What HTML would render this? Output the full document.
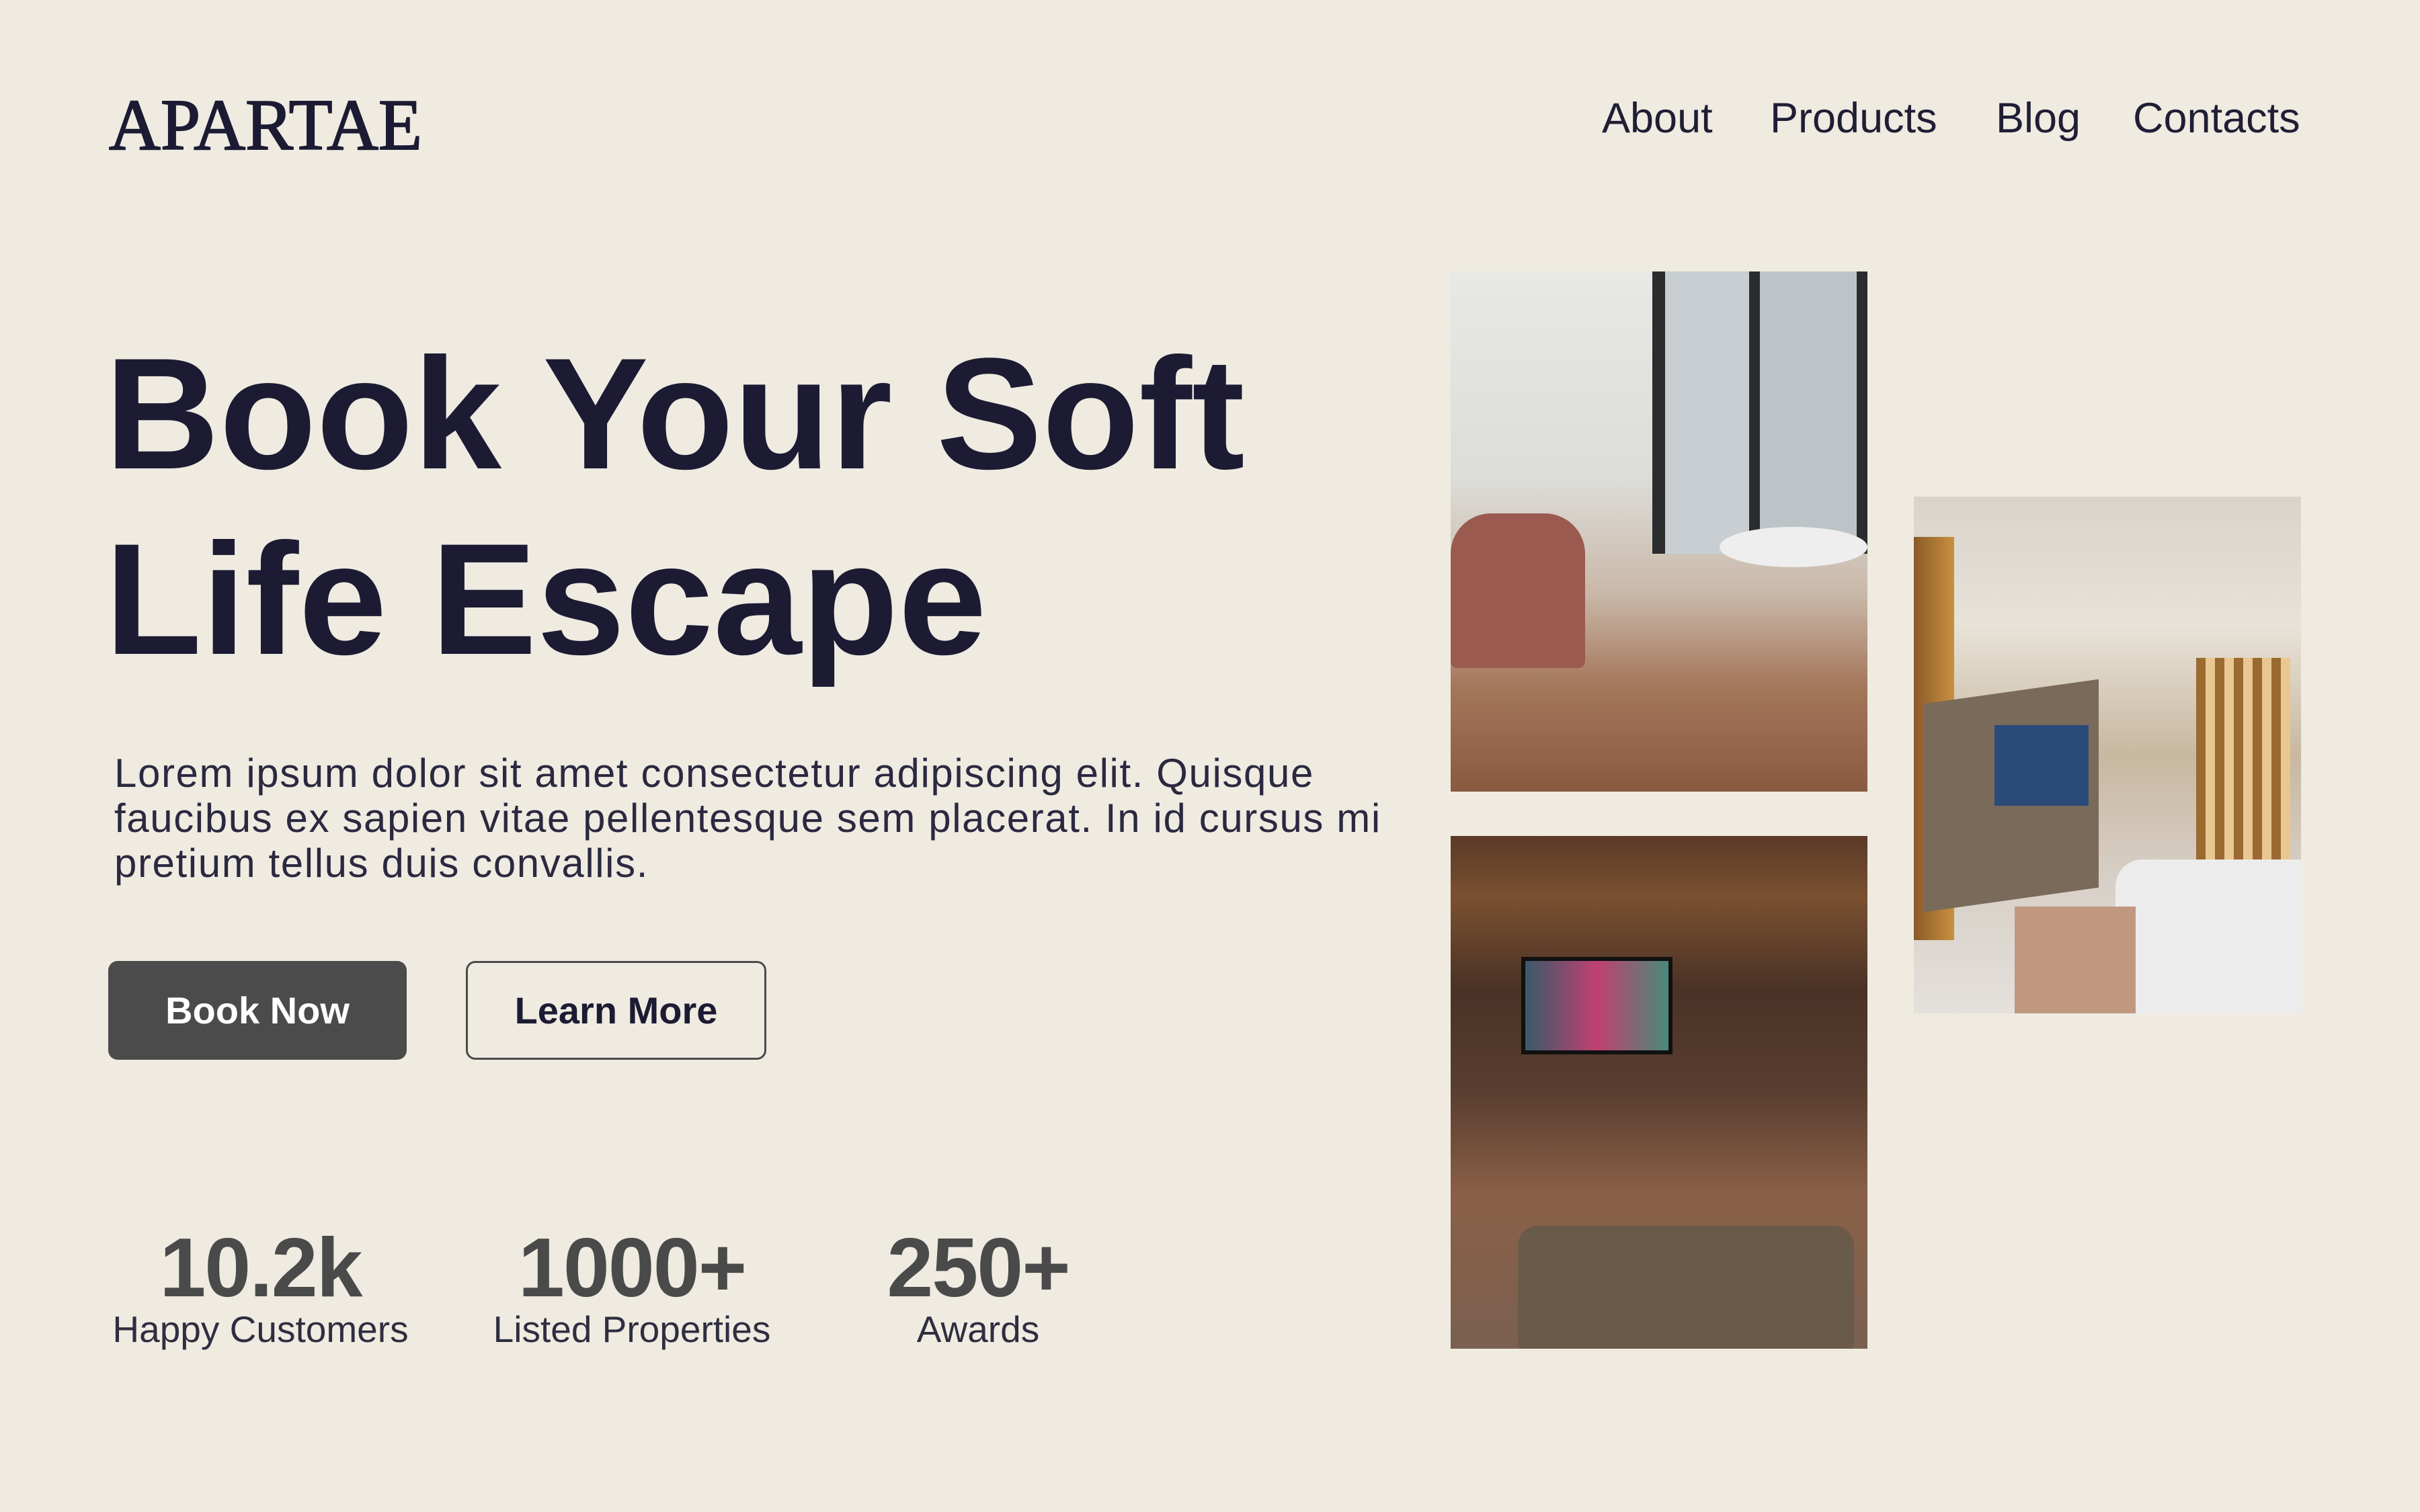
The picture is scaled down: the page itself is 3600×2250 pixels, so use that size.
<!DOCTYPE html>
<html><head><meta charset="utf-8"><style>
*{margin:0;padding:0;box-sizing:border-box}
body{width:3600px;height:2250px;background:#EFEBE1;font-family:"Liberation Sans",sans-serif;color:#1c1b33;position:relative;overflow:hidden}
.a{position:absolute;white-space:nowrap}
.nav{font-size:63px;top:140px;color:#1f1e35}
h1{position:absolute;left:156px;top:478px;font-size:236px;line-height:276px;font-weight:700;letter-spacing:0px;color:#1c1b33}
.p{left:170px;top:1117px;font-size:60px;line-height:67px;letter-spacing:1.6px;color:#2a2940}
.btn{position:absolute;top:1430px;height:147px;border-radius:14px;font-size:56px;font-weight:700;display:flex;align-items:center;justify-content:center}
.num{font-size:124px;font-weight:700;color:#4a4a4a;letter-spacing:-2px;text-align:center;top:1816px}
.lab{font-size:55px;color:#2e2e40;text-align:center;top:1946px}
.img{position:absolute;overflow:hidden}
</style></head><body>
<svg class="a" style="left:158px;top:130px" width="480" height="100"><text x="4" y="92" font-family="Liberation Serif" font-size="108" textLength="466" lengthAdjust="spacingAndGlyphs" fill="#1c1b33" stroke="#1c1b33" stroke-width="2">APARTAE</text></svg>
<div class="a nav" style="left:2383px">About</div>
<div class="a nav" style="left:2633px">Products</div>
<div class="a nav" style="left:2969px">Blog</div>
<div class="a nav" style="left:3173px">Contacts</div>
<h1>Book Your Soft<br>Life Escape</h1>
<div class="a p">Lorem ipsum dolor sit amet consectetur adipiscing elit. Quisque<br>faucibus ex sapien vitae pellentesque sem placerat. In id cursus mi<br>pretium tellus duis convallis.</div>
<div class="btn" style="left:161px;width:444px;background:#4b4b4b;color:#fff">Book Now</div>
<div class="btn" style="left:693px;width:447px;border:3px solid #4b4b4b;color:#1c1b33">Learn More</div>
<div class="a num" style="left:160px;width:455px">10.2k</div>
<div class="a num" style="left:720px;width:440px">1000+</div>
<div class="a num" style="left:1250px;width:410px">250+</div>
<div class="a lab" style="left:140px;width:495px">Happy Customers</div>
<div class="a lab" style="left:700px;width:480px">Listed Properties</div>
<div class="a lab" style="left:1250px;width:410px">Awards</div>
<div class="img" style="left:2158px;top:404px;width:620px;height:774px;background:linear-gradient(180deg,#e8e8e6 0%,#dcdcd8 40%,#c9b8a8 62%,#a4765a 80%,#8a5a40 100%)">
 <div class="a" style="left:300px;top:0;width:320px;height:420px;background:linear-gradient(90deg,#2a2c2e 0 6%,#c8ced2 6% 45%,#2a2c2e 45% 50%,#bcc4c8 50% 95%,#2a2c2e 95%)"></div>
 <div class="a" style="left:0;top:360px;width:200px;height:230px;background:#9a5a50;border-radius:60px 60px 10px 10px"></div>
 <div class="a" style="left:400px;top:380px;width:220px;height:60px;background:#eee;border-radius:50%"></div>
</div>
<div class="img" style="left:2158px;top:1244px;width:620px;height:763px;background:linear-gradient(180deg,#5a3a28 0%,#7a5030 12%,#4a3226 30%,#5a3e30 50%,#8a6048 70%,#7a6050 100%)">
 <div class="a" style="left:105px;top:180px;width:225px;height:145px;background:linear-gradient(90deg,#3a5a6a,#c04070,#4a8a7a);border:6px solid #111"></div>
 <div class="a" style="left:100px;top:580px;width:500px;height:200px;background:#6a5a4a;border-radius:30px"></div>
</div>
<div class="img" style="left:2847px;top:739px;width:576px;height:769px;background:linear-gradient(180deg,#d8d4cc 0%,#e8e2d8 25%,#c8b8a0 50%,#d8d0c8 75%,#e4e0dc 100%)">
 <div class="a" style="left:0;top:60px;width:60px;height:600px;background:linear-gradient(90deg,#8a5a28,#c89040)"></div>
 <div class="a" style="left:15px;top:290px;width:260px;height:310px;background:#7a6a5a;transform:skewY(-8deg)"></div>
 <div class="a" style="left:120px;top:340px;width:140px;height:120px;background:#2a4a7a"></div>
 <div class="a" style="left:420px;top:240px;width:140px;height:320px;background:repeating-linear-gradient(90deg,#9a6a30 0 14px,#e8c890 14px 28px)"></div>
 <div class="a" style="left:300px;top:540px;width:276px;height:229px;background:#ececec;border-radius:40px 0 0 0"></div>
 <div class="a" style="left:150px;top:610px;width:180px;height:159px;background:#c09880"></div>
</div>
</body></html>
